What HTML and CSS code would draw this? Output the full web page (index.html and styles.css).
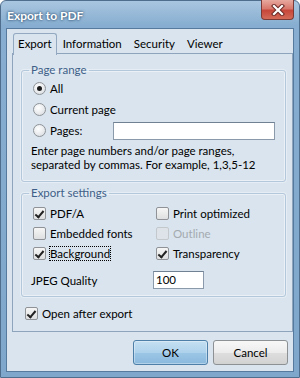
FILE: index.html
```html
<!DOCTYPE html>
<html lang="en">

<head>
    <meta charset="UTF-8">
    <meta name="viewport" content="width=device-width, initial-scale=1.0">
    <title>Export to PDF</title>
    <link rel="stylesheet" href="styles.css">
</head>

<body>
    <div class="window">
        <!-- Title bar -->
        <div class="titlebar">
            <span class="title">Export to PDF</span>
            <div class="close">
                <svg width="14" height="12" viewBox="0 0 14 12">
                    <path d="M3 2 L11 10 M11 2 L3 10" stroke="#6b2a26" stroke-width="4.2" stroke-linecap="square" />
                    <path d="M3 2 L11 10 M11 2 L3 10" stroke="#ffffff" stroke-width="2.2" stroke-linecap="square" />
                </svg>
            </div>
        </div>

        <div class="client">
            <div class="tabs">
                <span class="tab active">Export</span>
                <span class="tab">Information</span>
                <span class="tab">Security</span>
                <span class="tab">Viewer</span>
            </div>

            <div class="panel">
                <!-- Page range -->
                <fieldset class="group range">
                    <legend>Page range</legend>
                    <div class="radio-row"><span class="radio checked"></span>All</div>
                    <div class="radio-row"><span class="radio"></span>Current page</div>
                    <div class="radio-row">
                        <span class="radio"></span><span class="pages-label">Pages:</span>
                        <span class="field pages-field"></span>
                    </div>
                    <p class="hint">Enter page numbers and/or page ranges,<br>separated by commas. For example, 1,3,5-12</p>
                </fieldset>

                <!-- Export settings -->
                <fieldset class="group settings">
                    <legend>Export settings</legend>
                    <div class="check-grid">
                        <div class="check-row"><span class="check on"></span>PDF/A</div>
                        <div class="check-row"><span class="check"></span>Print optimized</div>
                        <div class="check-row"><span class="check"></span>Embedded fonts</div>
                        <div class="check-row disabled"><span class="check"></span>Outline</div>
                        <div class="check-row"><span class="check on"></span><span class="focus">Background</span></div>
                        <div class="check-row"><span class="check on"></span>Transparency</div>
                    </div>
                    <div class="quality-row">
                        <span class="quality-label">JPEG Quality</span>
                        <span class="field quality-field">100</span>
                    </div>
                </fieldset>

                <div class="check-row open-row"><span class="check on"></span>Open after export</div>
            </div>

            <div class="buttons">
                <div class="btn default">OK</div>
                <div class="btn">Cancel</div>
            </div>
        </div>
    </div>
</body>

</html>
```

FILE: styles.css
```css
body {
    margin: 0;
    font-family: Lato, "Noto Sans", sans-serif;
    font-size: 11.5px;
    color: #000;
}

.window {
    width: 300px;
    height: 378px;
    box-sizing: border-box;
    border: 1px solid #4f6d8d;
    border-radius: 6px 6px 0 0;
    background: linear-gradient(#a9c6e0 0, #87aed0 24px, #7ea7cb 100%);
    display: flex;
    flex-direction: column;
}

/* Title bar */
.titlebar {
    height: 27px;
    display: flex;
    align-items: flex-start;
    justify-content: space-between;
}

.title {
    margin: 7px 0 0 6px;
    font-weight: bold;
    font-size: 12px;
    color: #fff;
    text-shadow: 0 0 3px #2f4f70, 0 0 2px #4a6b8f;
}

.close {
    width: 33px;
    height: 20px;
    margin-right: 5px;
    margin-top: -1px;
    box-sizing: border-box;
    border: 1px solid #7b3a35;
    border-top: none;
    border-radius: 0 0 4px 4px;
    background: linear-gradient(#e8a99f 0, #d9786c 45%, #c7473b 55%, #d36a58 100%);
    display: flex;
    align-items: center;
    justify-content: center;
}

.client {
    flex: 1;
    margin: 0 5px 5px 5px;
    border: 1px solid #557a9e;
    background: #d9e4ee;
    display: flex;
    flex-direction: column;
    padding: 4px 0 0 5px;
}

/* Tabs */
.tabs {
    display: flex;
    padding-left: 1px;
    height: 21px;
    margin-bottom: -1px;
    position: relative;
    z-index: 1;
}

.tab {
    padding: 0 5px;
    border: 1px solid transparent;
    border-bottom: none;
    line-height: 19px;
}

.tab.active {
    padding: 0 4px;
    border-color: #93a9c1;
    border-radius: 3px 3px 0 0;
    background: #d9e4ee;
    height: 21px;
}

.panel {
    height: 279px;
    border: 1px solid #8ea4bc;
    box-sizing: border-box;
}

/* Group boxes */
.group {
    width: 265px;
    box-sizing: border-box;
    margin: 9px 0 0 8px;
    padding: 0 0 0 11px;
    border: 1px solid #b4c8dc;
    border-radius: 3px;
    box-shadow: inset 0 0 0 1px rgba(255, 255, 255, 0.45), 0 0 0 1px rgba(255, 255, 255, 0.35);
}

.group legend {
    padding: 0 2px;
    margin-left: -4px;
    line-height: 14px;
    color: #3e5f88;
}

.range {
    padding-bottom: 9px;
}

.settings {
    margin-top: 4px;
    padding-bottom: 7px;
}

.radio-row,
.check-row {
    display: flex;
    align-items: center;
    height: 21px;
}

.radio-row:first-of-type {
    margin-top: 1px;
}

.radio {
    width: 13px;
    height: 13px;
    box-sizing: border-box;
    border-radius: 50%;
    border: 1px solid #8f9397;
    background: radial-gradient(circle at 40% 35%, #ffffff 0, #eceef0 45%, #d4d8dc 100%);
    margin-right: 4px;
    display: flex;
    align-items: center;
    justify-content: center;
}

.radio.checked::after {
    content: "";
    width: 5px;
    height: 5px;
    border-radius: 50%;
    background: #1d1d1d;
}

.pages-label {
    width: 63px;
}

.field {
    box-sizing: border-box;
    height: 18px;
    border: 1px solid #8a9aab;
    border-top-color: #6f8192;
    background: #fff;
    line-height: 16px;
    padding-left: 2px;
}

.pages-field {
    width: 162px;
}

.hint {
    margin: 3px 0 0 -2px;
    line-height: 14px;
}

/* Checkboxes */
.check-grid {
    display: grid;
    grid-template-columns: 123px 1fr;
    margin-top: 3px;
}

.check-grid .check-row {
    height: 20px;
}

.check {
    width: 13px;
    height: 13px;
    box-sizing: border-box;
    border: 1px solid #8f9397;
    border-radius: 2px;
    background: linear-gradient(#f6f6f6, #dedfe0);
    margin-right: 4px;
    position: relative;
}

.check.on::after {
    content: "";
    position: absolute;
    left: 3px;
    top: 1px;
    width: 3px;
    height: 7px;
    border: solid #222;
    border-width: 0 2px 2px 0;
    transform: rotate(40deg);
}

.check-row.disabled {
    color: #a4aab0;
}

.check-row.disabled .check {
    border-color: #c3c8cd;
    background: #dde3e9;
}

.focus {
    outline: 1px dotted #000;
    outline-offset: 0;
    line-height: 13px;
}

.quality-row {
    display: flex;
    align-items: center;
    margin-top: 8px;
}

.quality-label {
    width: 122px;
    margin-left: -2px;
}

.quality-field {
    width: 51px;
}

.open-row {
    margin: 6px 0 0 12px;
    height: 20px;
}

/* Buttons */
.buttons {
    display: flex;
    justify-content: flex-end;
    gap: 5px;
    margin: 8px 5px 0 0;
}

.btn {
    width: 75px;
    height: 25px;
    box-sizing: border-box;
    border: 1px solid #8d9194;
    border-radius: 3px;
    background: linear-gradient(#f8f8f8 0, #ececec 50%, #dedede 51%, #d2d2d2 100%);
    display: flex;
    align-items: center;
    justify-content: center;
}

.btn.default {
    border-color: #4d7fa8;
    background: linear-gradient(#c4dff1 0, #aed2ec 50%, #9cc6e5 51%, #8ab9dd 100%);
    box-shadow: inset 0 0 0 1px rgba(255, 255, 255, 0.35);
}
```
